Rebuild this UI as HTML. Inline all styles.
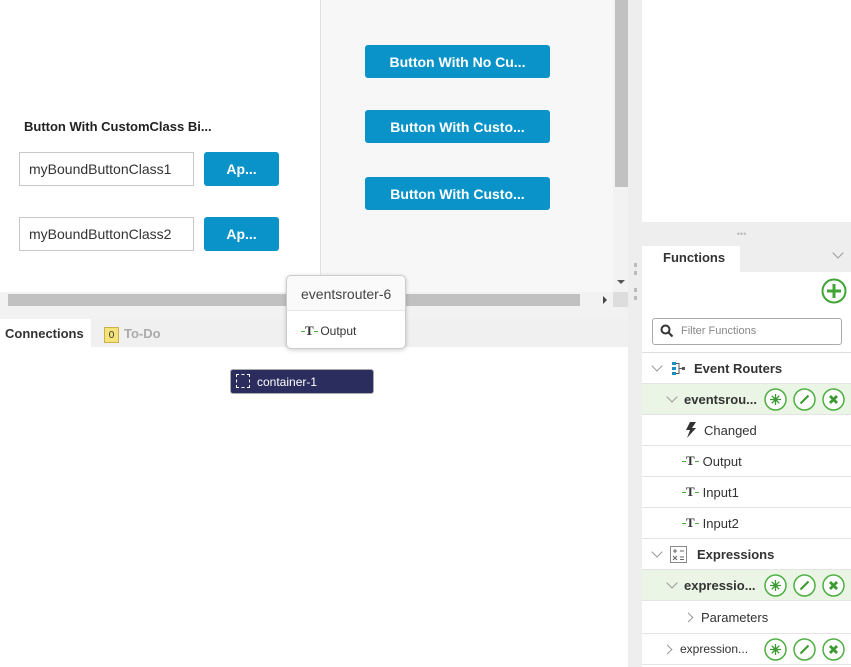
<!DOCTYPE html>
<html><head><style>
*{box-sizing:border-box;margin:0;padding:0}
body{width:851px;height:667px;position:relative;overflow:hidden;font-family:"Liberation Sans",Arial,sans-serif;background:#fff;color:#333}
.a{position:absolute}
.btn{position:absolute;background:#0a93c8;color:#fff;font-weight:bold;font-size:14px;border-radius:3px;display:flex;align-items:center;justify-content:center}
.inp{position:absolute;border:1px solid #c8c8c8;background:#fff;font-size:14px;padding-left:9px;display:flex;align-items:center;color:#333}
.row{position:absolute;left:642px;width:209px;border-bottom:1px solid #e4e4e4;font-size:13px;display:flex;align-items:center}
.g{background:#eaf5e5}
.ci{position:absolute;top:4px}
.T{font-family:"Liberation Serif",serif;font-weight:bold;font-size:13px;color:#333;position:relative}
.T:before,.T:after{content:"";position:absolute;top:8px;width:4px;height:1px;background:#4caf3f}
.T:before{left:-4px}.T:after{right:-4px}
.dn{width:8px;height:8px;border-right:1px solid #999;border-bottom:1px solid #999;transform:rotate(45deg);margin-top:-4px}
.rt{width:7px;height:7px;border-right:1px solid #999;border-bottom:1px solid #999;transform:rotate(-45deg)}
</style></head><body>
<div class="a" style="left:320px;top:0;width:293px;height:292px;background:#f7f7f7;border-left:1px solid #e2e2e2"></div>
<div class="btn" style="left:365px;top:45px;width:185px;height:33px">Button With No Cu...</div>
<div class="btn" style="left:365px;top:110px;width:185px;height:33px">Button With Custo...</div>
<div class="btn" style="left:365px;top:177px;width:185px;height:33px">Button With Custo...</div>
<div class="a" style="left:24px;top:119px;font-size:13px;font-weight:bold;color:#222">Button With CustomClass Bi...</div>
<div class="inp" style="left:19px;top:152px;width:175px;height:34px">myBoundButtonClass1</div>
<div class="btn" style="left:204px;top:152px;width:75px;height:34px">Ap...</div>
<div class="inp" style="left:19px;top:217px;width:175px;height:34px">myBoundButtonClass2</div>
<div class="btn" style="left:204px;top:217px;width:75px;height:34px">Ap...</div>
<div class="a" style="left:613px;top:0;width:15px;height:292px;background:#f2f2f2"></div>
<div class="a" style="left:615px;top:0;width:13px;height:187px;background:#c1c1c1"></div>
<div class="a" style="left:617px;top:280px;border:4px solid transparent;border-top:4px solid #555;border-bottom:0"></div>
<div class="a" style="left:0;top:292px;width:613px;height:15px;background:#f2f2f2"></div>
<div class="a" style="left:8px;top:294px;width:572px;height:12px;background:#c1c1c1"></div>
<div class="a" style="left:603px;top:296px;border:4px solid transparent;border-left:4px solid #444;border-right:0"></div>
<div class="a" style="left:613px;top:292px;width:15px;height:16px;background:#ddd"></div>
<div class="a" style="left:628px;top:0;width:14px;height:667px;background:#eee"></div>
<div class="a" style="left:634px;top:263px;width:3px;height:12px;border-left:3px dotted #bbb"></div>
<div class="a" style="left:634px;top:288px;width:3px;height:12px;border-left:3px dotted #bbb"></div>
<div class="a" style="left:0;top:307px;width:628px;height:12px;background:#f2f2f2"></div>
<div class="a" style="left:0;top:319px;width:628px;height:28px;background:#f0f0f0"></div>
<div class="a" style="left:0;top:319px;width:91px;height:28px;background:#fff;font-size:13px;font-weight:bold;padding:7px 0 0 5px;color:#333">Connections</div>
<div class="a" style="left:104px;top:327px;width:15px;height:16px;background:#f5e27a;border:1px solid #c9b24a;font-size:10px;text-align:center;line-height:16px">0</div>
<div class="a" style="left:124px;top:326px;font-size:13px;font-weight:bold;color:#aaa">To-Do</div>
<div class="a" style="left:230px;top:369px;width:144px;height:25px;background:#2b2d5e;border:1px solid #aaa;border-radius:3px;color:#fff;font-size:12px;display:flex;align-items:center;padding-left:26px">container-1</div>
<div class="a" style="left:236px;top:374px;width:14px;height:14px;border:1.5px dashed #fff"></div>
<div class="a" style="left:286px;top:275px;width:120px;height:74px;background:#fff;border:1px solid #ccc;border-radius:5px;box-shadow:0 1px 4px rgba(0,0,0,.2)">
<div style="height:35px;border-bottom:1px solid #e6e6e6;font-size:14px;color:#444;padding:10px 0 0 14px;background:#fafafa;border-radius:5px 5px 0 0">eventsrouter-6</div>
<div style="font-size:12px;padding:12px 0 0 18px"><span class="T">T</span>&nbsp;&nbsp;Output</div></div>
<div class="a" style="left:642px;top:222px;width:209px;height:24px;background:#eee;font-size:9px;color:#bbb;text-align:center;line-height:24px;padding-right:10px">•••</div>
<div class="a" style="left:642px;top:246px;width:209px;height:26px;background:#eee"></div>
<div class="a" style="left:642px;top:246px;width:98px;height:26px;background:#fff;font-size:13px;font-weight:bold;padding:4px 0 0 21px">Functions</div>
<div class="a" style="left:834px;top:249px;width:8px;height:8px;border-right:1px solid #999;border-bottom:1px solid #999;transform:rotate(45deg)"></div>
<svg class="a" style="left:821px;top:278px" width="26" height="26"><circle cx="13" cy="13" r="11.5" stroke="#3fa535" stroke-width="2" fill="#fff"/><path d="M13 6v14M6 13h14" stroke="#3fa535" stroke-width="3"/></svg>
<div class="a" style="left:652px;top:318px;width:190px;height:27px;border:1px solid #aaa;border-radius:3px;font-size:11px;color:#888;padding:6px 0 0 28px">Filter Functions</div>
<svg class="a" style="left:660px;top:324px" width="14" height="14"><circle cx="5.5" cy="5.5" r="4" stroke="#333" stroke-width="2" fill="none"/><path d="M8.5 8.5l4 4" stroke="#333" stroke-width="2"/></svg>
<div class="a" style="left:642px;top:352px;width:209px;height:1px;background:#ddd"></div>
<svg width="0" height="0" style="position:absolute"><defs>
<g id="c1"><circle cx="11.5" cy="11.5" r="10.5" fill="#fff" stroke="#4caf3f" stroke-width="1.5"/><g stroke="#3a9a30" stroke-width="1.3"><path d="M11.5 6v11M6 11.5h11M7.7 7.7l7.6 7.6M15.3 7.7l-7.6 7.6"/></g><circle cx="11.5" cy="11.5" r="2" fill="#3a9a30"/></g>
<g id="c2"><circle cx="11.5" cy="11.5" r="10.5" fill="#fff" stroke="#4caf3f" stroke-width="1.5"/><path d="M7.5 15.5l8-8" stroke="#3a9a30" stroke-width="2"/></g>
<g id="c3"><circle cx="11.5" cy="11.5" r="10.5" fill="#fff" stroke="#4caf3f" stroke-width="1.5"/><path d="M8 8l7 7M15 8l-7 7" stroke="#3a9a30" stroke-width="2.8"/></g>
</defs></svg>
<div class="row" style="top:353px;height:31px"><div class="dn" style="margin-left:11px"></div>
<svg style="margin-left:10px" width="14" height="14"><rect x="1" y="1" width="4" height="3" fill="#1a8fc0"/><rect x="1" y="6" width="4" height="3" fill="#1a8fc0"/><rect x="1" y="11" width="4" height="3" fill="#1a8fc0"/><path d="M5 2.5h3v10H5M8 7.5h3" stroke="#555" fill="none"/><rect x="11" y="6" width="3" height="3" fill="#555"/></svg>
<b style="margin-left:9px;color:#333">Event Routers</b></div>
<div class="row g" style="top:384px;height:31px"><div class="dn" style="margin-left:26px"></div><b style="margin-left:8px;color:#333">eventsrou...</b>
<svg class="ci" style="left:122px" width="23" height="23"><use href="#c1"/></svg><svg class="ci" style="left:151px" width="23" height="23"><use href="#c2"/></svg><svg class="ci" style="left:180px" width="23" height="23"><use href="#c3"/></svg></div>
<div class="row" style="top:415px;height:31px"><svg style="margin-left:43px" width="12" height="16"><path d="M5 0h6L7 6h4L2 16l3-8H1z" fill="#333"/></svg><span style="margin-left:7px">Changed</span></div>
<div class="row" style="top:446px;height:31px"><span class="T" style="margin-left:44px">T</span><span style="margin-left:8px">Output</span></div>
<div class="row" style="top:477px;height:31px"><span class="T" style="margin-left:44px">T</span><span style="margin-left:8px">Input1</span></div>
<div class="row" style="top:508px;height:31px"><span class="T" style="margin-left:44px">T</span><span style="margin-left:8px">Input2</span></div>
<div class="row" style="top:539px;height:31px"><div class="dn" style="margin-left:11px"></div>
<svg style="margin-left:9px" width="17" height="17"><rect x=".5" y=".5" width="16" height="16" fill="#fff" stroke="#888"/><path d="M3 5h4M5 3v4M10 5h4M3 10l4 4M7 10l-4 4M10 11h4M10 13.5h4" stroke="#666"/></svg>
<b style="margin-left:10px;color:#333">Expressions</b></div>
<div class="row g" style="top:570px;height:31px"><div class="dn" style="margin-left:26px"></div><b style="margin-left:8px;color:#333">expressio...</b>
<svg class="ci" style="left:122px" width="23" height="23"><use href="#c1"/></svg><svg class="ci" style="left:151px" width="23" height="23"><use href="#c2"/></svg><svg class="ci" style="left:180px" width="23" height="23"><use href="#c3"/></svg></div>
<div class="row" style="top:601px;height:33px"><div class="rt" style="margin-left:43px"></div><span style="margin-left:9px">Parameters</span></div>
<div class="row" style="top:634px;height:31px"><div class="rt" style="margin-left:22px"></div><span style="margin-left:9px;font-size:12px">expression...</span>
<svg class="ci" style="left:122px" width="23" height="23"><use href="#c1"/></svg><svg class="ci" style="left:151px" width="23" height="23"><use href="#c2"/></svg><svg class="ci" style="left:180px" width="23" height="23"><use href="#c3"/></svg></div>
</body></html>
